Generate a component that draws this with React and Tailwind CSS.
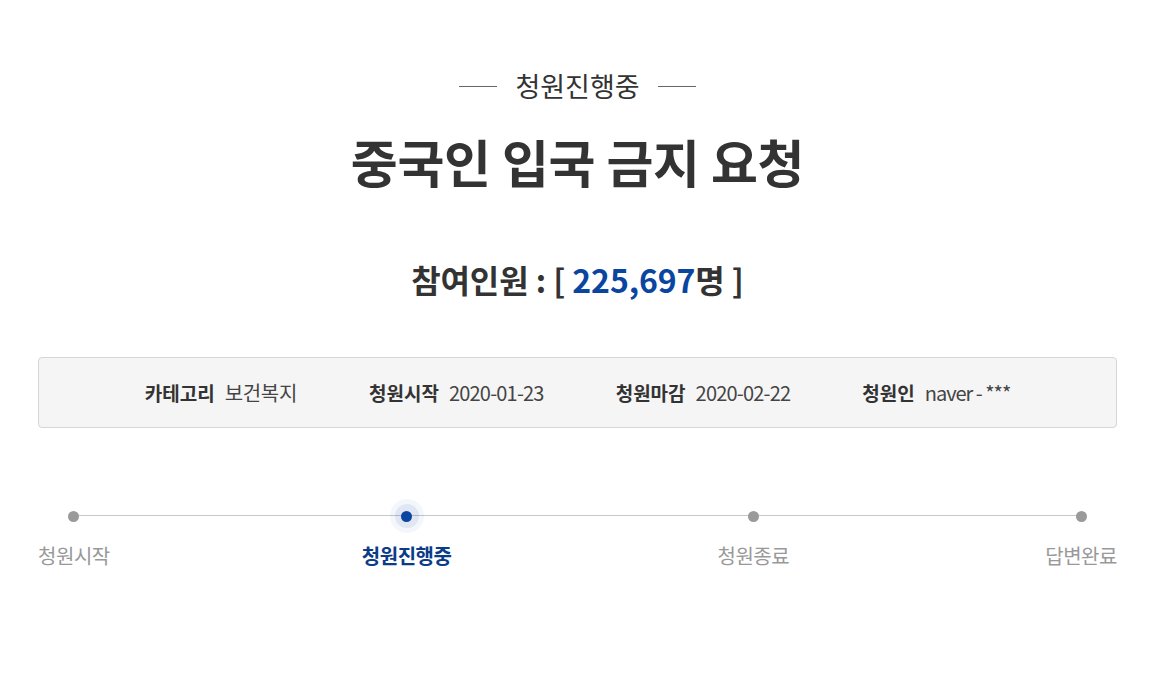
const FONT = "font-['Noto_Sans_CJK_KR','Noto_Sans',sans-serif]";

const INFO = [
  { label: "카테고리", value: "보건복지", track: "tracking-[-0.3px]" },
  { label: "청원시작", value: "2020-01-23", track: "tracking-[-0.8px]" },
  { label: "청원마감", value: "2020-02-22", track: "tracking-[-0.8px]" },
  { label: "청원인", value: "naver - ***", track: "tracking-[-1px]" },
];

// step positions: width + left margin so dot centres land where the screenshot has them
const STEPS = [
  { name: "청원시작", cls: "w-[72px]" },
  { name: "청원진행중", cls: "w-[90px] ml-[252px]", active: true },
  { name: "청원종료", cls: "w-[72px] ml-[266px]" },
  { name: "답변완료", cls: "w-[72px] ml-[256px]" },
];

export default function App() {
  return (
    <div className={`min-h-screen bg-white text-[#333] ${FONT}`}>
      <div className="pl-[38px] w-[1117px] pt-[68px]">
        {/* status */}
        <div className="flex items-center justify-center gap-[18px]">
          <span className="w-[38px] h-px bg-[#666]" />
          <span className="text-[27px] leading-[36px] text-[#333]">청원진행중</span>
          <span className="w-[38px] h-px bg-[#666]" />
        </div>

        {/* title */}
        <h1 className="mt-[26px] text-center text-[51px] leading-[62px] font-bold tracking-[-0.3px] text-[#333]">
          중국인 입국 금지 요청
        </h1>

        {/* count */}
        <p className="mt-[65px] text-center text-[32px] leading-[44px] font-bold tracking-[-0.1px] text-[#333]">
          참여인원 : [ <span className="text-[#0a469f]">225,697</span>명 ]
        </p>

        {/* info box */}
        <div className="mt-[56px] h-[71px] rounded-[4px] border border-[#d6d6d6] bg-[#f5f5f5] flex items-center justify-center gap-[72px]">
          {INFO.map((it) => (
            <div key={it.label} className="flex items-center gap-[10px] leading-[26px]">
              <span className="text-[19px] font-bold text-[#333]">{it.label}</span>
              <span className={`text-[20px] text-[#444] ${it.track}`}>{it.value}</span>
            </div>
          ))}
        </div>

        {/* progress */}
        <div className="relative mt-[77px] flex">
          <div className="absolute left-[36px] w-[1008px] top-[10px] h-px bg-[#c8c8c8]" />
          {STEPS.map((s) => (
            <div key={s.name} className={`relative flex flex-col items-center ${s.cls}`}>
              <div className="h-[22px] flex items-center justify-center">
                {s.active ? (
                  <span className="flex items-center justify-center w-[34px] h-[34px] rounded-full bg-[#0a469f]/5">
                    <span className="flex items-center justify-center w-[24px] h-[24px] rounded-full bg-[#0a469f]/8">
                      <span className="w-[11px] h-[11px] rounded-full bg-[#0a469f]" />
                    </span>
                  </span>
                ) : (
                  <span className="w-[11px] h-[11px] rounded-full bg-[#9a9a9a]" />
                )}
              </div>
              <span
                className={`mt-[16px] text-[20px] leading-[26px] whitespace-nowrap tracking-[-0.5px] ${
                  s.active ? "font-bold text-[#0b3c87]" : "text-[#999]"
                }`}
              >
                {s.name}
              </span>
            </div>
          ))}
        </div>
      </div>
    </div>
  );
}
